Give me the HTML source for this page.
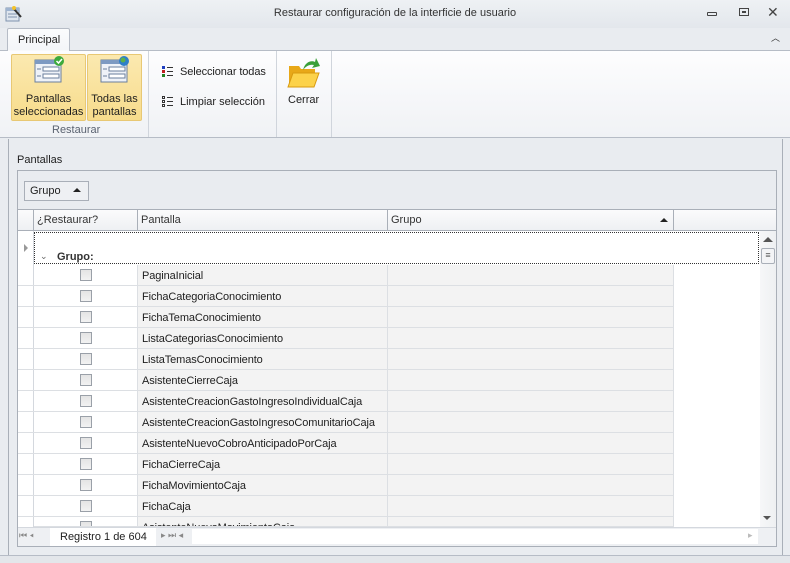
<!DOCTYPE html>
<html><head><meta charset="utf-8"><style>
*{box-sizing:border-box;margin:0;padding:0}
body{width:790px;height:563px;overflow:hidden;background:#e9ecf0;font-family:"Liberation Sans",sans-serif;font-size:11px;color:#1e1e1e;position:relative}
.a{position:absolute}
.t{white-space:nowrap}
</style></head><body>
<div class="a" style="left:0;top:0;width:790px;height:28px;background:linear-gradient(#eef1f4,#e3e7ec)"></div>
<svg class="a" style="left:5px;top:5px" width="18" height="18"><rect x="1" y="3" width="13" height="13" fill="#dfe6ef" stroke="#7f93ad"/><rect x="1" y="3" width="13" height="3" fill="#9fb4d0"/><line x1="3" y1="9" x2="12" y2="9" stroke="#7f93ad"/><line x1="3" y1="12" x2="12" y2="12" stroke="#7f93ad"/><line x1="9" y1="4" x2="16" y2="12" stroke="#333" stroke-width="2"/><circle cx="9" cy="3" r="2" fill="#f3c22b"/></svg>
<div class="a t" style="left:0;width:790px;top:7px;text-align:center;font-size:11px;color:#333">Restaurar configuración de la interficie de usuario</div>
<div class="a" style="left:707px;top:12px;width:10px;height:4px;border:1px solid #444;border-radius:1px"></div>
<div class="a" style="left:739px;top:8px;width:10px;height:8px;border:1px solid #444"><div style="margin:2px;width:4px;height:2px;border:1px solid #444"></div></div>
<div class="a t" style="left:767px;top:4px;font-size:14px;color:#444">✕</div>
<div class="a t" style="left:771px;top:31px;font-size:9px;color:#333">︿</div>
<div class="a" style="left:7px;top:28px;width:63px;height:23px;background:linear-gradient(#fbfcfd,#f3f5f8);border:1px solid #b6bcc6;border-bottom:none;border-radius:2px 2px 0 0"></div>
<div class="a t" style="left:18px;top:34px;font-size:11px">Principal</div>
<div class="a" style="left:0;top:50px;width:790px;height:88px;background:linear-gradient(#fdfdfe,#f0f2f5);border-top:1px solid #b6bcc6;border-bottom:1px solid #b6bcc6"></div>
<div class="a" style="left:8px;top:50px;width:61px;height:1px;background:#f8f9fb"></div>
<div class="a" style="left:148px;top:51px;width:1px;height:86px;background:#d0d5dc"></div>
<div class="a" style="left:276px;top:51px;width:1px;height:86px;background:#d0d5dc"></div>
<div class="a" style="left:331px;top:51px;width:1px;height:86px;background:#d0d5dc"></div>
<div class="a" style="left:11px;top:54px;width:75px;height:67px;background:linear-gradient(#fbe9b0,#f7dc8c);border:1px solid #e8c874;border-radius:2px"></div>
<div class="a" style="left:87px;top:54px;width:55px;height:67px;background:linear-gradient(#fbe9b0,#f7dc8c);border:1px solid #e8c874;border-radius:2px"></div>
<svg class="a" style="left:33px;top:56px" width="32" height="30"><rect x="2" y="4" width="26" height="22" fill="#eef2f8" stroke="#6a7f9d"/><rect x="2" y="4" width="26" height="4" fill="#7d9ac2"/><rect x="10" y="11" width="16" height="4" fill="#fff" stroke="#6a7f9d"/><rect x="10" y="18" width="16" height="4" fill="#fff" stroke="#6a7f9d"/><line x1="4" y1="13" x2="8" y2="13" stroke="#6a7f9d"/><line x1="4" y1="20" x2="8" y2="20" stroke="#6a7f9d"/><circle cx="26" cy="5" r="5" fill="#3caa3c"/><path d="M23.5 5 l2 2 l3.5-4" stroke="#fff" stroke-width="1.5" fill="none"/></svg>
<svg class="a" style="left:99px;top:56px" width="32" height="30"><rect x="2" y="4" width="26" height="22" fill="#eef2f8" stroke="#6a7f9d"/><rect x="2" y="4" width="26" height="4" fill="#7d9ac2"/><rect x="10" y="11" width="16" height="4" fill="#fff" stroke="#6a7f9d"/><rect x="10" y="18" width="16" height="4" fill="#fff" stroke="#6a7f9d"/><line x1="4" y1="13" x2="8" y2="13" stroke="#6a7f9d"/><line x1="4" y1="20" x2="8" y2="20" stroke="#6a7f9d"/><circle cx="25" cy="5" r="5" fill="#2f7fc8"/><circle cx="24" cy="4" r="2.5" fill="#5cb04a"/></svg>
<div class="a" style="left:11px;top:93px;width:75px;text-align:center;line-height:13px">Pantallas<br>seleccionadas</div>
<div class="a" style="left:87px;top:93px;width:55px;text-align:center;line-height:13px">Todas las<br>pantallas</div>
<div class="a t" style="left:52px;top:124px;color:#5a6270">Restaurar</div>
<svg class="a" style="left:162px;top:65px" width="12" height="13"><rect x="0" y="1" width="3" height="3" fill="#2040c0"/><rect x="0" y="5" width="3" height="3" fill="#c02020"/><rect x="0" y="9" width="3" height="3" fill="#208020"/><path d="M5 2.5h6M5 6.5h6M5 10.5h6" stroke="#333"/></svg>
<div class="a t" style="left:180px;top:66px;letter-spacing:-0.1px">Seleccionar todas</div>
<svg class="a" style="left:162px;top:95px" width="12" height="13"><rect x="0.5" y="1.5" width="2" height="2" fill="none" stroke="#333"/><rect x="0.5" y="5.5" width="2" height="2" fill="none" stroke="#333"/><rect x="0.5" y="9.5" width="2" height="2" fill="none" stroke="#333"/><path d="M5 2.5h6M5 6.5h6M5 10.5h6" stroke="#333"/></svg>
<div class="a t" style="left:180px;top:96px">Limpiar selección</div>
<svg class="a" style="left:287px;top:56px" width="34" height="32"><path d="M2 10h10l2 3h14v16H2z" fill="#e8a818"/><path d="M1 31l5-14h26l-5 14z" fill="#fcd24a" stroke="#d89a10"/><path d="M16 14c2-8 8-10 12-8l1-4 4 8-8 2 2-3c-4-1-8 1-11 5z" fill="#3aa03a"/></svg>
<div class="a t" style="left:288px;top:94px">Cerrar</div>
<div class="a" style="left:8px;top:139px;width:775px;height:416px;border-left:1px solid #a9afb8;border-right:1px solid #a9afb8"></div>
<div class="a" style="left:0;top:555px;width:790px;height:8px;background:#e3e6ea;border-top:1px solid #b6bcc6"></div>
<div class="a t" style="left:17px;top:154px">Pantallas</div>
<div class="a" style="left:17px;top:170px;width:760px;height:377px;border:1px solid #a9afb8;background:#fff"></div>
<div class="a" style="left:18px;top:171px;width:758px;height:39px;background:#e9ecf0;border-bottom:1px solid #a9afb8"></div>
<div class="a" style="left:24px;top:181px;width:65px;height:20px;border:1px solid #a9afb8;background:#eef0f3"></div>
<div class="a t" style="left:30px;top:185px">Grupo</div>
<div class="a" style="left:73px;top:188px;width:0;height:0;border-left:4px solid transparent;border-right:4px solid transparent;border-bottom:4px solid #222"></div>
<div class="a" style="left:18px;top:210px;width:758px;height:21px;background:linear-gradient(#fbfbfc,#eef0f3);border-bottom:1px solid #a9afb8"></div>
<div class="a" style="left:33px;top:210px;width:1px;height:21px;background:#a9afb8"></div>
<div class="a" style="left:137px;top:210px;width:1px;height:21px;background:#a9afb8"></div>
<div class="a" style="left:387px;top:210px;width:1px;height:21px;background:#a9afb8"></div>
<div class="a" style="left:673px;top:210px;width:1px;height:21px;background:#a9afb8"></div>
<div class="a t" style="left:37px;top:214px;color:#333">¿Restaurar?</div>
<div class="a t" style="left:141px;top:214px;color:#333">Pantalla</div>
<div class="a t" style="left:391px;top:214px;color:#333">Grupo</div>
<div class="a" style="left:660px;top:218px;width:0;height:0;border-left:4px solid transparent;border-right:4px solid transparent;border-bottom:4px solid #222"></div>
<div class="a" style="left:18px;top:231px;width:16px;height:296px;border-right:1px solid #d4d8de"></div>
<div class="a" style="left:24px;top:244px;width:0;height:0;border-top:4px solid transparent;border-bottom:4px solid transparent;border-left:4px solid #999"></div>
<div class="a" style="left:34px;top:232px;width:725px;height:32px;border:1px dotted #333"></div>
<div class="a t" style="left:40px;top:251px;font-size:9px;color:#666">⌄</div>
<div class="a t" style="left:57px;top:251px;font-weight:bold;color:#333">Grupo:</div>
<div id="rows"></div>
<div class="a" style="left:760px;top:231px;width:16px;height:296px;background:linear-gradient(90deg,#f6f7f8,#eef0f2)"></div>
<div class="a" style="left:763px;top:237px;width:0;height:0;border-left:5px solid transparent;border-right:5px solid transparent;border-bottom:5px solid #555"></div>
<div class="a" style="left:761px;top:248px;width:14px;height:16px;border:1px solid #a9afb8;border-radius:2px;background:#f3f4f6;font-size:9px;text-align:center;line-height:13px;color:#555">≡</div>
<div class="a" style="left:763px;top:516px;width:0;height:0;border-left:4px solid transparent;border-right:4px solid transparent;border-top:4px solid #555"></div>
<div class="a" style="left:18px;top:527px;width:758px;height:19px;background:#eef0f3;border-top:1px solid #d4d8de"></div>
<div class="a" style="left:50px;top:528px;width:106px;height:18px;background:#fff"></div>
<div class="a t" style="left:19px;top:530px;font-size:9px;color:#888">⏮ ◂</div>
<div class="a t" style="left:60px;top:531px">Registro 1 de 604</div>
<div class="a t" style="left:161px;top:530px;font-size:9px;color:#888">▸ ⏭ ◂</div>
<div class="a" style="left:192px;top:529px;width:566px;height:15px;background:#fff"></div>
<div class="a t" style="left:748px;top:530px;font-size:9px;color:#bbb">▸</div>
<script>
var n=["PaginaInicial","FichaCategoriaConocimiento","FichaTemaConocimiento","ListaCategoriasConocimiento","ListaTemasConocimiento","AsistenteCierreCaja","AsistenteCreacionGastoIngresoIndividualCaja","AsistenteCreacionGastoIngresoComunitarioCaja","AsistenteNuevoCobroAnticipadoPorCaja","FichaCierreCaja","FichaMovimientoCaja","FichaCaja","AsistenteNuevoMovimientoCaja"];
var h="";for(var i=0;i<n.length;i++){var y=265+21*i;var hh=Math.min(21,527-y);
h+='<div class="a" style="left:34px;top:'+y+'px;width:640px;height:'+hh+'px;overflow:hidden;border-bottom:1px solid #dcdfe3"><div class="a" style="left:103px;top:0;width:537px;height:21px;background:#f3f3f3"></div><div class="a" style="left:353px;top:0;width:1px;height:21px;background:#dcdfe3"></div><div class="a" style="left:103px;top:0;width:1px;height:21px;background:#dcdfe3"></div><div class="a" style="left:639px;top:0;width:1px;height:21px;background:#dcdfe3"></div><div class="a" style="left:46px;top:4px;width:12px;height:12px;border:1px solid #9aa0a8;background:linear-gradient(#e4e4e4,#f2f2f2)"></div><div class="a t" style="left:108px;top:5px;letter-spacing:-0.1px">'+n[i]+'</div></div>';
h+='<div class="a" style="left:18px;top:'+(y+20)+'px;width:16px;height:1px;background:#dcdfe3"></div>';}
document.getElementById("rows").innerHTML=h;
</script>
</body></html>
